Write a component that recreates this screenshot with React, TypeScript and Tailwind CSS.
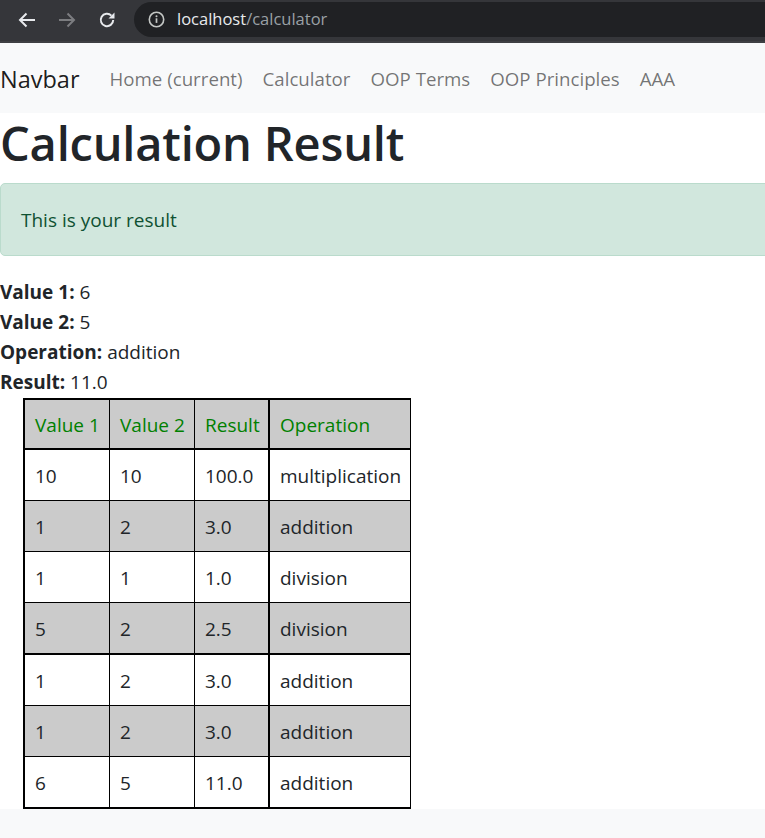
import React from "react";

const rows: [string, string, string, string][] = [
  ["10", "10", "100.0", "multiplication"],
  ["1", "2", "3.0", "addition"],
  ["1", "1", "1.0", "division"],
  ["5", "2", "2.5", "division"],
  ["1", "2", "3.0", "addition"],
  ["1", "2", "3.0", "addition"],
  ["6", "5", "11.0", "addition"],
];

function BackIcon({ color }: { color: string }) {
  return (
    <svg width="18" height="16" viewBox="0 0 18 16" fill="none">
      <path d="M17 8H2" stroke={color} strokeWidth="2" />
      <path d="M8.5 1.5L2 8l6.5 6.5" stroke={color} strokeWidth="2" />
    </svg>
  );
}

function ForwardIcon({ color }: { color: string }) {
  return (
    <svg width="18" height="16" viewBox="0 0 18 16" fill="none">
      <path d="M1 8H16" stroke={color} strokeWidth="2" />
      <path d="M9.5 1.5L16 8l-6.5 6.5" stroke={color} strokeWidth="2" />
    </svg>
  );
}

function ReloadIcon() {
  return (
    <svg width="18" height="18" viewBox="0 0 18 18" fill="none">
      <path d="M15.2 9a6.2 6.2 0 1 1-1.8-4.4" stroke="#e8eaed" strokeWidth="2" />
      <path d="M16.5 1.5v6h-6z" fill="#e8eaed" />
    </svg>
  );
}

function InfoIcon() {
  return (
    <svg width="17" height="17" viewBox="0 0 17 17" fill="none">
      <circle cx="8.5" cy="8.5" r="7.2" stroke="#c4c7c5" strokeWidth="1.6" />
      <path d="M8.5 7.3v4.6" stroke="#c4c7c5" strokeWidth="1.7" />
      <circle cx="8.5" cy="5.2" r="1" fill="#c4c7c5" />
    </svg>
  );
}

export default function App() {
  return (
    <div className="w-[765px] min-h-[838px] overflow-hidden bg-white font-['Open_Sans',sans-serif] text-[#212529]">
      {/* browser chrome */}
      <div className="h-[43px] bg-[#35363a] border-b-2 border-[#3e3f43] flex items-start pl-[7px]">
        <div className="w-[40px] h-[39px] flex items-center justify-center">
          <BackIcon color="#e8eaed" />
        </div>
        <div className="w-[40px] h-[39px] flex items-center justify-center">
          <ForwardIcon color="#7c7d80" />
        </div>
        <div className="w-[40px] h-[39px] flex items-center justify-center">
          <ReloadIcon />
        </div>
        <div className="ml-[7px] mt-[2px] h-[35px] flex-1 rounded-l-full bg-[#202124] flex items-center pl-[14px]">
          <InfoIcon />
          <span className="ml-[12px] text-[16.5px] leading-none">
            <span className="text-[#e8eaed]">localhost</span>
            <span className="text-[#9aa0a6]">/calculator</span>
          </span>
        </div>
      </div>

      {/* navbar */}
      <nav className="h-[70px] bg-[#f8f9fa] flex items-center pt-[2px]">
        <a className="text-[23.5px] leading-[37px] text-black/90 mr-[20px]">Navbar</a>
        <a className="px-[10px] text-[18.7px] leading-[30px] text-black/55">Home (current)</a>
        <a className="px-[10px] text-[18.7px] leading-[30px] text-black/55">Calculator</a>
        <a className="px-[10px] text-[18.7px] leading-[30px] text-black/55">OOP Terms</a>
        <a className="px-[10px] text-[18.7px] leading-[30px] text-black/55">OOP Principles</a>
        <a className="px-[10px] text-[18.7px] leading-[30px] text-black/55">AAA</a>
      </nav>

      {/* main */}
      <main className="text-[19px] leading-[30px]">
        <h1 className="text-[47px] leading-[60px] font-semibold mb-[10px] tracking-[-0.2px]">Calculation Result</h1>
        <div className="w-[calc(100%+20px)] border border-[#badbcc] bg-[#d1e7dd] text-[#0f5132] rounded-[5px] px-[20px] pt-[21px] pb-[20px] mb-[21px]">
          This is your result
        </div>
        <div>
          <b className="font-bold">Value 1:</b> 6
        </div>
        <div>
          <b className="font-bold">Value 2:</b> 5
        </div>
        <div>
          <b className="font-bold">Operation:</b> addition
        </div>
        <div>
          <b className="font-bold">Result:</b> 11.0
        </div>

        <table className="ml-[23px] mt-px border-separate border-spacing-0 table-fixed w-[388px] whitespace-nowrap">
          <thead>
            <tr className="bg-[#cbcbcb] text-[#008000]">
              <th className="w-[87px] border-l-2 border-t-2 border-b-2 border-r border-black px-[10px] pt-[10px] pb-[8px] text-left font-normal">Value 1</th>
              <th className="w-[85px] border-t-2 border-b-2 border-r border-black px-[10px] pt-[10px] pb-[8px] text-left font-normal">Value 2</th>
              <th className="w-[75px] border-t-2 border-b-2 border-r-2 border-black px-[10px] pt-[10px] pb-[8px] text-left font-normal">Result</th>
              <th className="w-[141px] border-t-2 border-b-2 border-r border-black px-[10px] pt-[10px] pb-[8px] text-left font-normal">Operation</th>
            </tr>
          </thead>
          <tbody>
            {rows.map((r, i) => {
              const bg = i % 2 === 1 ? "bg-[#cbcbcb]" : "bg-white";
              const thick = i === 3 || i === rows.length - 1;
              const bb = thick ? "border-b-2" : "border-b";
              return (
                <tr key={i} className={bg}>
                  <td className={`border-l-2 border-r ${bb} border-black px-[10px] pt-[11px] pb-[9px]`}>{r[0]}</td>
                  <td className={`border-r ${bb} border-black px-[10px] pt-[11px] pb-[9px]`}>{r[1]}</td>
                  <td className={`border-r-2 ${bb} border-black px-[10px] pt-[11px] pb-[9px]`}>{r[2]}</td>
                  <td className={`border-r ${bb} border-black px-[10px] pt-[11px] pb-[9px]`}>{r[3]}</td>
                </tr>
              );
            })}
          </tbody>
        </table>
      </main>

      <footer className="h-[40px] bg-[#f8f9fa]" />
    </div>
  );
}
